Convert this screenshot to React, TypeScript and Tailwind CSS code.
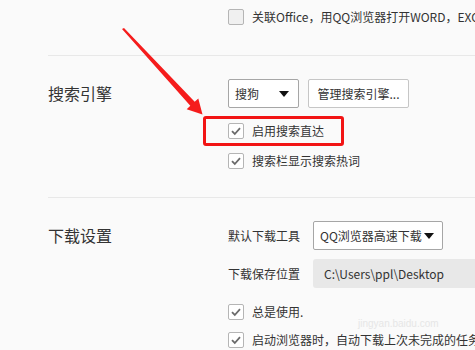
import React from "react";

const font = { fontFamily: '"Noto Sans CJK SC", "Noto Sans", sans-serif' };

function Check({ checked }: { checked?: boolean }) {
  return (
    <span
      className={`w-4 h-4 shrink-0 rounded-[2px] border border-[#b5b5b5] flex items-center justify-center ${
        checked ? "bg-white" : "bg-[#f0f0f0]"
      }`}
    >
      {checked && (
        <svg width="12" height="12" viewBox="0 0 12 12">
          <path d="M2 6.2 L4.8 9 L10 3.2" fill="none" stroke="#6b6b6b" strokeWidth="1.8" />
        </svg>
      )}
    </span>
  );
}

function CheckRow({ checked, label }: { checked?: boolean; label: string }) {
  return (
    <div className="flex items-center gap-2 h-4 whitespace-nowrap">
      <Check checked={checked} />
      <span className="text-[12px] text-[#333] leading-none">{label}</span>
    </div>
  );
}

function Caret() {
  return (
    <svg width="10" height="6" viewBox="0 0 10 6" className="shrink-0">
      <path d="M0 0 H10 L5 6 Z" fill="#111" />
    </svg>
  );
}

export default function App() {
  return (
    <div className="relative w-[475px] h-[350px] overflow-hidden bg-[#fafafa] text-[#333]" style={font}>
      {/* Office row */}
      <div className="pl-[228px] pt-[9px] h-[55px]">
        <CheckRow label="关联Office，用QQ浏览器打开WORD，EXCEL，PPT文件" />
      </div>
      <div className="ml-[48px] h-px bg-[#e8e8e8]" />

      {/* 搜索引擎 */}
      <div className="flex pl-[48px] pt-[23px] h-[141px]">
        <div className="w-[180px] shrink-0 text-[16px] leading-[29px]">搜索引擎</div>
        <div className="flex flex-col shrink-0">
          <div className="flex gap-[9px]">
            <div className="w-[71px] h-[29px] bg-white border border-[#a6a6a6] rounded-[2px] flex items-center justify-between pl-[6px] pr-[9px] text-[12px]">
              <span>搜狗</span>
              <Caret />
            </div>
            <div className="w-[101px] h-[29px] bg-white border border-[#c6c6c6] rounded-[2px] flex items-center justify-center text-[12px]">
              管理搜索引擎...
            </div>
          </div>
          <div className="mt-[15px]">
            <CheckRow checked label="启用搜索直达" />
          </div>
          <div className="mt-[14px]">
            <CheckRow checked label="搜索栏显示搜索热词" />
          </div>
        </div>
      </div>
      <div className="ml-[48px] h-px bg-[#e8e8e8]" />

      {/* 下载设置 */}
      <div className="flex pl-[48px] pt-[23px]">
        <div className="w-[180px] shrink-0 text-[16px] leading-[29px]">下载设置</div>
        <div className="flex flex-col shrink-0">
          <div className="flex items-center">
            <span className="w-[85px] shrink-0 text-[12px]">默认下载工具</span>
            <div className="w-[130px] h-[29px] bg-white border border-[#a6a6a6] rounded-[2px] flex items-center justify-between pl-[6px] pr-[8px] text-[12px]">
              <span>QQ浏览器高速下载</span>
              <Caret />
            </div>
          </div>
          <div className="flex items-center mt-[9px]">
            <span className="w-[85px] text-[12px] shrink-0">下载保存位置</span>
            <div className="w-[200px] h-[29px] bg-[#e8e8e8] rounded-[3px] flex items-center pl-[11px] text-[12px] whitespace-nowrap">
              C:\Users\ppl\Desktop
            </div>
          </div>
          <div className="mt-[16px]">
            <CheckRow checked label="总是使用." />
          </div>
          <div className="mt-[12px]">
            <CheckRow checked label="启动浏览器时，自动下载上次未完成的任务" />
          </div>
        </div>
      </div>

      {/* watermark */}
      <div className="absolute left-[358px] top-[319px] text-[10px] leading-[10px] text-[#e6e6e6] whitespace-nowrap" style={{ fontFamily: '"Liberation Sans", sans-serif' }}>
        jingyan.baidu.com
      </div>

      {/* highlight box */}
      <div className="absolute left-[203px] top-[116px] w-[141px] h-[30px] border-[3px] border-[#f21414] rounded-[3px]" />

      {/* red arrow */}
      <svg className="absolute left-0 top-0" width="475" height="350">
        <polygon
          points="122,29 124,28 194.7,101.8 198.3,98.4 202.5,114.5 186.7,109.2 190.3,105.8"
          fill="#f51c1c"
        />
      </svg>
    </div>
  );
}
